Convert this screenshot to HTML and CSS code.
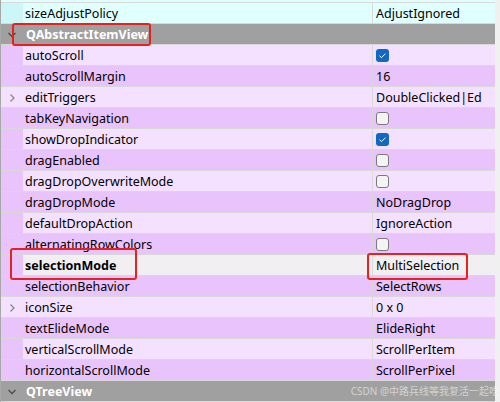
FILE: index.html
```html
<!DOCTYPE html>
<html>
<head>
<meta charset="utf-8">
<link rel="stylesheet" href="styles.css">
</head>
<body>
<div class="sheet">
  <div class="row strip cyan"></div>
  <div class="row cyan"><div class="gut"></div><div class="name">sizeAdjustPolicy</div><div class="val">AdjustIgnored</div></div>
  <div class="row group"><div class="gut"><svg width="10" height="10" viewBox="0 0 10 10"><polyline points="1.5,3 5,6.5 8.5,3" fill="none" stroke="#4a4a4a" stroke-width="1.3"/></svg></div><div class="gname">QAbstractItemView</div></div>
  <div class="row light"><div class="gut"></div><div class="name">autoScroll</div><div class="val"><span class="cb on"><svg width="13" height="13" viewBox="0 0 13 13"><polyline points="3.5,6.8 5.5,8.6 9.5,4.6" fill="none" stroke="#fff" stroke-width="1"/></svg></span></div></div>
  <div class="row dark"><div class="gut"></div><div class="name">autoScrollMargin</div><div class="val">16</div></div>
  <div class="row light"><div class="gut exp"><svg width="10" height="10" viewBox="0 0 10 10"><polyline points="3.5,1.5 7,5 3.5,8.5" fill="none" stroke="#8a8a8a" stroke-width="1.3"/></svg></div><div class="name">editTriggers</div><div class="val">DoubleClicked|Ed</div></div>
  <div class="row dark"><div class="gut"></div><div class="name">tabKeyNavigation</div><div class="val"><span class="cb"></span></div></div>
  <div class="row light"><div class="gut"></div><div class="name">showDropIndicator</div><div class="val"><span class="cb on"><svg width="13" height="13" viewBox="0 0 13 13"><polyline points="3.5,6.8 5.5,8.6 9.5,4.6" fill="none" stroke="#fff" stroke-width="1"/></svg></span></div></div>
  <div class="row dark"><div class="gut"></div><div class="name">dragEnabled</div><div class="val"><span class="cb"></span></div></div>
  <div class="row light"><div class="gut"></div><div class="name">dragDropOverwriteMode</div><div class="val"><span class="cb"></span></div></div>
  <div class="row dark"><div class="gut"></div><div class="name">dragDropMode</div><div class="val">NoDragDrop</div></div>
  <div class="row light"><div class="gut"></div><div class="name">defaultDropAction</div><div class="val">IgnoreAction</div></div>
  <div class="row dark"><div class="gut"></div><div class="name">alternatingRowColors</div><div class="val"><span class="cb"></span></div></div>
  <div class="row sel"><div class="gut"></div><div class="name bold">selectionMode</div><div class="val">MultiSelection</div></div>
  <div class="row dark"><div class="gut"></div><div class="name">selectionBehavior</div><div class="val">SelectRows</div></div>
  <div class="row light"><div class="gut exp"><svg width="10" height="10" viewBox="0 0 10 10"><polyline points="3.5,1.5 7,5 3.5,8.5" fill="none" stroke="#8a8a8a" stroke-width="1.3"/></svg></div><div class="name">iconSize</div><div class="val">0 x 0</div></div>
  <div class="row dark"><div class="gut"></div><div class="name">textElideMode</div><div class="val">ElideRight</div></div>
  <div class="row light"><div class="gut"></div><div class="name">verticalScrollMode</div><div class="val">ScrollPerItem</div></div>
  <div class="row dark"><div class="gut"></div><div class="name">horizontalScrollMode</div><div class="val">ScrollPerPixel</div></div>
  <div class="row group"><div class="gut"><svg width="10" height="10" viewBox="0 0 10 10"><polyline points="1.5,3 5,6.5 8.5,3" fill="none" stroke="#4a4a4a" stroke-width="1.3"/></svg></div><div class="gname">QTreeView</div></div>
</div>
<div class="mark m1"></div>
<div class="mark m2"></div>
<div class="mark m3"></div>
<div class="watermark">CSDN @中路兵线等我复活一起吃</div>
</body>
</html>
```

FILE: styles.css
```css
html, body {
  margin: 0;
  padding: 0;
}
body {
  width: 500px;
  height: 402px;
  overflow: hidden;
  position: relative;
  background: #f0f0f0;
  font-family: "Noto Sans", "Noto Sans CJK SC", sans-serif;
  font-size: 12.5px;
  color: #000;
}
.sheet {
  width: 494px;
  border-left: 1px solid #a8a8a8;
}
.row {
  display: grid;
  grid-template-columns: 22px 349px 123px;
  height: 20px;
  border-bottom: 1px solid #d8d8d8;
  line-height: 21px;
  overflow: hidden;
}
.strip {
  height: 2px;
}
.gut {
  display: flex;
  align-items: center;
  justify-content: center;
}
.name {
  padding-left: 2px;
  white-space: nowrap;
}
.val {
  border-left: 1px solid #d8d8d8;
  padding-left: 3px;
  white-space: nowrap;
  overflow: hidden;
  display: flex;
  align-items: center;
}
.bold { font-weight: bold; }
.cyan { background: #e0ffff; }
.cyan .gut { background: #cdf6f8; }
.light { background: #f4e0ff; }
.light .gut { background: #e9c3fc; }
.light .gut.exp { background: #f4e0ff; }
.dark { background: #e9c3fc; }
.sel { background: #f1eff1; }
.sel .gut { background: #e9c3fc; }
.group {
  background: #a0a0a0;
  grid-template-columns: 22px 1fr;
}
.gname {
  color: #fff;
  font-weight: bold;
  padding-left: 3px;
}
.cb {
  width: 11px;
  height: 11px;
  border: 1px solid #7a7a7a;
  border-radius: 3px;
  background: #f4f4f4;
  display: inline-block;
}
.cb.on {
  width: 13px;
  height: 13px;
  border: none;
  background: #0f68c3;
}
.cb svg { display: block; }
.mark {
  position: absolute;
  border: 2px solid #e8211f;
  border-radius: 3px;
  box-sizing: border-box;
}
.m1 { left: 12px; top: 23px; width: 139px; height: 23px; }
.m2 { left: 10px; top: 248px; width: 127px; height: 32px; }
.m3 { left: 367px; top: 253px; width: 101px; height: 27px; }
.watermark {
  position: absolute;
  right: 1px;
  top: 384px;
  white-space: nowrap;
  color: rgba(255, 255, 255, 0.55);
  font-size: 10px;
  line-height: 14px;
}
```
